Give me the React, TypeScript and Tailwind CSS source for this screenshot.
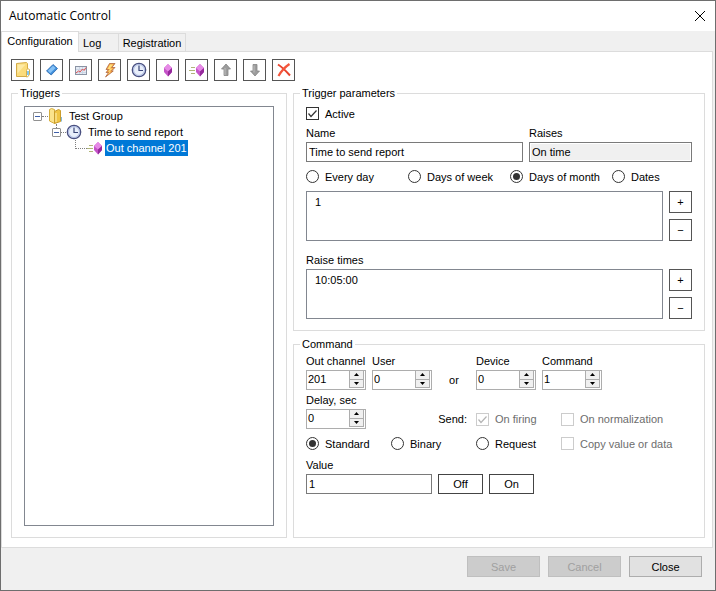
import { useId, type ReactNode } from "react";

function FolderIcon() {
  return (
    <svg width="16" height="16" viewBox="0 0 16 16" aria-hidden="true">
      <path d="M1.500 1.500l10-1 1 1v13h-11z" fill="#fbdc7c" stroke="#d3ab47" />
      <path d="M2.500 2.500h8l-8 9z" fill="#fdeaa6" />
      <path d="M11.500 8.500l1-2 2 1v5l-2 2.500h-1z" fill="#fff" stroke="#d8b04c" />
      <path d="M13 9v4" stroke="#58b4ec" strokeWidth="1.500" />
    </svg>
  );
}

function OpenFolderIcon() {
  return (
    <svg width="16" height="16" viewBox="0 0 16 16" aria-hidden="true">
      <path d="M1.500 1.500l2-1 3 1v14l-5-2.500z" fill="#fbe38c" stroke="#d6ae3c" />
      <path d="M6.500 3.500l4-2 2 1v11l-6 2z" fill="#f0c544" stroke="#c99d2e" />
      <path d="M8 5v9" stroke="#fdf0b4" />
      <path d="M13.500 9v4.500" stroke="#86b9d8" />
    </svg>
  );
}

function BlueDiamondIcon() {
  return (
    <svg width="16" height="16" viewBox="0 0 16 16" aria-hidden="true">
      <path d="M2.500 9L9 2.500 13.500 6.500 7.200 13z" fill="#3f8fdc" stroke="#2a66ac" strokeWidth="0.800" />
      <path d="M3.800 8.800L9 3.700l2.600 2.200-5.400 5.300z" fill="#86c2f6" />
    </svg>
  );
}

function ChartIcon() {
  return (
    <svg width="16" height="16" viewBox="0 0 16 16" aria-hidden="true">
      <rect x="2.500" y="4.500" width="11" height="8" fill="#e4ebf4" stroke="#8a93a3" />
      <path d="M3 7.500h10M3 10.500h10M6.500 5v7M9.500 5v7" stroke="#cbd5e4" />
      <path d="M3 11l2.500-2 1.500 1 2.500-3 1.500 1.500 2-3" fill="none" stroke="#e05050" />
    </svg>
  );
}

function BoltIcon() {
  return (
    <svg width="16" height="16" viewBox="0 0 16 16" aria-hidden="true">
      <path d="M7.500 1.500H13L9.800 5.500H13L9.500 9h1.800L3.500 15l3-4.500H4L6.500 7.500H4z" fill="#f4a044" stroke="#a85c34" strokeWidth="0.700" />
      <path d="M8 2.500h3.200L7.800 6.500h3L7 9.800h2L5.500 13l2.300-3.500H6L8.200 7H5.600z" fill="#fde07c" />
    </svg>
  );
}

function ClockIcon() {
  return (
    <svg width="16" height="16" viewBox="0 0 16 16" aria-hidden="true">
      <circle cx="8" cy="8" r="6.700" fill="#e9effb" stroke="#4a5080" strokeWidth="1.300" />
      <circle cx="8" cy="8" r="5.500" fill="none" stroke="#a9b8e0" />
      <path d="M8 3.500v5h4" fill="none" stroke="#3b4678" strokeWidth="1.200" />
    </svg>
  );
}

function Gem({ cx }: { cx: number }) {
  return (
    <g transform={`translate(${cx} 0)`}>
      <path d="M0 2l4 4v4l-4 4.500L-4 10V6z" fill="#c552c8" />
      <path d="M0 2l4 4-4 3.500L-4 6z" fill="#e68ae6" />
      <path d="M0 9.500L4 6v4l-4 4.500z" fill="#952a9c" />
    </g>
  );
}

function GemIcon() {
  return (
    <svg width="16" height="16" viewBox="0 0 16 16" aria-hidden="true">
      <Gem cx={8} />
    </svg>
  );
}

function FlyingGemIcon() {
  return (
    <svg width="16" height="16" viewBox="0 0 16 16" aria-hidden="true">
      <path d="M2 5.500h4M0 8.500h6M2 11.500h4" stroke="#b0b478" />
      <Gem cx={11} />
    </svg>
  );
}

function ArrowIcon({ down = false }: { down?: boolean }) {
  return (
    <svg width="16" height="16" viewBox="0 0 16 16" aria-hidden="true">
      <path
        d={down ? "M6 2.500h4v6.500h2.500L8 14 3.500 9H6z" : "M6 13.500h4V7h2.500L8 2 3.500 7H6z"}
        fill="#9c9c9c"
        stroke="#858585"
        strokeWidth="0.800"
      />
      <path d={down ? "M7 3.500v7" : "M7 6v7"} stroke="#bdbdbd" />
    </svg>
  );
}

function DeleteIcon() {
  return (
    <svg width="16" height="16" viewBox="0 0 16 16" aria-hidden="true">
      <path d="M2 2.500c4 2.500 8 6.500 12 11" fill="none" stroke="#e8432c" strokeWidth="2" />
      <path d="M13.500 2C9 5 5 9.500 2.500 14" fill="none" stroke="#f4563c" strokeWidth="2.200" />
    </svg>
  );
}

const tools: { label: string; icon: ReactNode }[] = [
  { label: "Add group", icon: <FolderIcon /> },
  { label: "Add trigger", icon: <BlueDiamondIcon /> },
  { label: "Add value trigger", icon: <ChartIcon /> },
  { label: "Add event trigger", icon: <BoltIcon /> },
  { label: "Add timer", icon: <ClockIcon /> },
  { label: "Add command", icon: <GemIcon /> },
  { label: "Add output command", icon: <FlyingGemIcon /> },
  { label: "Move up", icon: <ArrowIcon /> },
  { label: "Move down", icon: <ArrowIcon down /> },
  { label: "Delete", icon: <DeleteIcon /> },
];

function Group({ title, className = "", children }: { title: string; className?: string; children: ReactNode }) {
  return (
    <fieldset className={`flex min-w-0 flex-col border border-[#dcdcdc] px-1.5 pb-[11px] ${className}`}>
      <legend className="h-[13px] px-0.5 leading-[13px]">{title}</legend>
      <div className="flex min-h-0 flex-1 flex-col px-1.5">{children}</div>
    </fieldset>
  );
}

function Radio({ name, label, checked = false }: { name: string; label: string; checked?: boolean }) {
  return (
    <label className="flex h-[13px] items-center gap-1.5 whitespace-nowrap">
      <input
        type="radio"
        name={name}
        defaultChecked={checked}
        className="size-[13px] shrink-0 appearance-none rounded-full border border-[#333] bg-white bg-clip-content p-0.5 checked:bg-[#333]"
      />
      {label}
    </label>
  );
}

function Check({ label, checked = false, disabled = false }: { label: string; checked?: boolean; disabled?: boolean }) {
  return (
    <label className={`flex h-[13px] items-center gap-1.5 whitespace-nowrap ${disabled ? "text-[#6d6d6d]" : ""}`}>
      <span className="grid size-[13px] shrink-0">
        <input
          type="checkbox"
          defaultChecked={checked}
          disabled={disabled}
          className="peer col-start-1 row-start-1 size-[13px] appearance-none border border-[#333] bg-white disabled:border-[#ccc]"
        />
        <svg
          viewBox="0 0 13 13"
          className="pointer-events-none invisible col-start-1 row-start-1 size-[13px] stroke-[#333] peer-checked:visible peer-disabled:stroke-[#b4b4b4]"
          fill="none"
          aria-hidden="true"
        >
          <path d="M2.500 6.500l2.500 3 5.500-6" strokeWidth="1.200" />
        </svg>
      </span>
      {label}
    </label>
  );
}

function Spin({ label, value }: { label: string; value: number }) {
  const id = useId();
  return (
    <div className="flex w-[60px] flex-col gap-0.5">
      <label htmlFor={id} className="h-3.5 whitespace-nowrap leading-[14px]">
        {label}
      </label>
      <div className="flex h-5 border border-[#adadad] bg-white pr-px pb-px">
        <input
          id={id}
          type="number"
          defaultValue={value}
          className="h-4 w-0 flex-1 appearance-none pl-px outline-none [appearance:textfield]"
        />
        <div className="flex w-[15px] flex-col">
          <button
            aria-label={`Increase ${label}`}
            className="flex flex-1 items-center justify-center border border-t-0 border-[#adadad] bg-[#f0f0f0]"
          >
            <svg width="5" height="3" viewBox="0 0 5 3" aria-hidden="true">
              <path d="M0 3h5L2.500 0z" />
            </svg>
          </button>
          <button
            aria-label={`Decrease ${label}`}
            className="flex flex-1 items-center justify-center border border-t-0 border-[#adadad] bg-[#f0f0f0]"
          >
            <svg width="5" height="3" viewBox="0 0 5 3" aria-hidden="true">
              <path d="M0 0h5L2.500 3z" />
            </svg>
          </button>
        </div>
      </div>
    </div>
  );
}

function TextField({
  label,
  value,
  readOnly = false,
  className = "",
}: {
  label: string;
  value: string;
  readOnly?: boolean;
  className?: string;
}) {
  const id = useId();
  return (
    <div className={`flex flex-col gap-0.5 ${className}`}>
      <label htmlFor={id} className="h-3.5 leading-[14px]">
        {label}
      </label>
      <input
        id={id}
        type="text"
        defaultValue={value}
        readOnly={readOnly}
        className="h-5 w-full border border-[#7a7a7a] bg-white px-0.5 outline-none read-only:bg-[#f0f0f0] read-only:shadow-[inset_0_0_0_1px_#fff]"
      />
    </div>
  );
}

function ListEditor({ label, items }: { label: string; items: string[] }) {
  return (
    <div className="flex gap-1.5">
      <select aria-label={label} size={2} className="h-[50px] min-w-0 flex-1 overflow-hidden border border-[#828790] bg-white px-0.5 pt-1 outline-none">
        {items.map((item) => (
          <option key={item} className="h-4 px-1.5 leading-4">
            {item}
          </option>
        ))}
      </select>
      <div className="flex flex-col gap-1.5">
        <button aria-label={`Add to ${label}`} className="h-[22px] w-[23px] border border-[#555] leading-[20px]">
          +
        </button>
        <button aria-label={`Remove from ${label}`} className="h-[22px] w-[23px] border border-[#555] leading-[20px]">
          −
        </button>
      </div>
    </div>
  );
}

function Expander() {
  return (
    <button aria-label="Collapse" className="flex size-[9px] shrink-0 items-center justify-center rounded-[1px] border border-[#919191] bg-white">
      <svg width="5" height="1" viewBox="0 0 5 1" aria-hidden="true">
        <path d="M0 0h5v1H0z" fill="#3f5fa8" />
      </svg>
    </button>
  );
}

function TriggerTree() {
  return (
    <ul role="tree" aria-label="Triggers" className="flex-1 border border-[#828790] bg-white py-px">
      <li role="treeitem" aria-expanded="true">
        <div className="flex h-4 items-center pl-2">
          <Expander />
          <span className="w-1.5 border-t border-dotted border-[#808080]" />
          <OpenFolderIcon />
          <span className="pl-[5px]">Test Group</span>
        </div>
        <ul role="group">
          <li role="treeitem" aria-expanded="true">
            <div className="flex h-4 items-center pl-[27px]">
              <span className="flex h-4 flex-col items-center">
                <span className="h-1 border-l border-dotted border-[#808080]" />
                <Expander />
              </span>
              <span className="w-[5px] border-t border-dotted border-[#808080]" />
              <ClockIcon />
              <span className="pl-1.5">Time to send report</span>
            </div>
            <ul role="group">
              <li role="treeitem" aria-selected="true" className="flex h-4 items-center pl-[50px]">
                <span className="h-[9px] w-3 self-start border-b border-l border-dotted border-[#808080]" />
                <FlyingGemIcon />
                <span className="ml-0.5 h-4 bg-[#0078d7] px-px leading-4 text-white">Out channel 201</span>
              </li>
            </ul>
          </li>
        </ul>
      </li>
    </ul>
  );
}

export default function App() {
  return (
    <div className="flex min-h-screen flex-col border border-[#6e6e6e] bg-[#f0f0f0] font-['Liberation_Sans',Arial,sans-serif] text-[11px] leading-[14px] text-black">
      <header className="flex h-[30px] items-center justify-between bg-white pr-[9px] pl-2">
        <h1 className="font-['Open_Sans','Noto_Sans',sans-serif] text-xs">Automatic Control</h1>
        <button aria-label="Close window">
          <svg width="12" height="12" viewBox="0 0 12 12" fill="none" stroke="#000" aria-hidden="true">
            <path d="M1 1l10 10M11 1L1 11" />
          </svg>
        </button>
      </header>

      <div role="tablist" className="flex h-5 items-end">
        <button
          role="tab"
          aria-selected="true"
          className="z-10 -mb-px h-[21px] w-[78px] border border-b-0 border-[#dcdcdc] bg-white pb-0.5"
        >
          Configuration
        </button>
        <button role="tab" className="h-[18px] w-10 border-t border-r border-[#dcdcdc] pl-1 text-left">
          Log
        </button>
        <button role="tab" className="h-[18px] w-[67px] border-t border-r border-[#dcdcdc]">
          Registration
        </button>
      </div>

      <main className="mr-0.5 flex flex-1 flex-col gap-1.5 border border-[#dcdcdc] bg-white pt-[7px] pr-[7px] pb-[9px] pl-[9px]">
        <div role="toolbar" className="flex gap-1.5">
          {tools.map(({ label, icon }) => (
            <button
              key={label}
              aria-label={label}
              className="flex h-[22px] w-[23px] items-center justify-center border border-[#555] bg-white"
            >
              {icon}
            </button>
          ))}
        </div>

        <div className="flex flex-1 gap-1.5">
          <Group title="Triggers" className="w-[276px] shrink-0 pt-1.5">
            <TriggerTree />
          </Group>

          <div className="flex min-w-0 flex-1 flex-col gap-[7px]">
            <Group title="Trigger parameters" className="pt-[7px]">
              <Check label="Active" checked />
              <div className="flex gap-1.5 pt-1.5">
                <TextField label="Name" value="Time to send report" className="min-w-0 flex-1" />
                <TextField label="Raises" value="On time" readOnly className="w-[163px]" />
              </div>
              <div className="grid grid-cols-[102px_102px_102px_auto] py-2">
                <Radio name="schedule" label="Every day" />
                <Radio name="schedule" label="Days of week" />
                <Radio name="schedule" label="Days of month" checked />
                <Radio name="schedule" label="Dates" />
              </div>
              <ListEditor label="Days" items={["1"]} />
              <p className="pt-3 pb-0.5">Raise times</p>
              <ListEditor label="Raise times" items={["10:05:00"]} />
            </Group>

            <Group title="Command" className="flex-1 pt-[3px]">
              <div className="flex items-end gap-1.5">
                <Spin label="Out channel" value={201} />
                <Spin label="User" value={0} />
                <span className="flex h-5 w-8 items-center justify-center">or</span>
                <Spin label="Device" value={0} />
                <Spin label="Command" value={1} />
              </div>
              <div className="grid grid-cols-[85px_85px_85px_auto] items-end pt-[3px]">
                <Spin label="Delay, sec" value={0} />
                <span className="flex h-5 items-center justify-end pr-[9px]">Send:</span>
                <span className="flex h-5 items-center">
                  <Check label="On firing" checked disabled />
                </span>
                <span className="flex h-5 items-center">
                  <Check label="On normalization" disabled />
                </span>
              </div>
              <div className="grid grid-cols-[85px_85px_85px_auto] py-2">
                <Radio name="kind" label="Standard" checked />
                <Radio name="kind" label="Binary" />
                <Radio name="kind" label="Request" />
                <Check label="Copy value or data" disabled />
              </div>
              <div className="flex items-end gap-1.5">
                <TextField label="Value" value="1" className="w-[126px]" />
                <button className="h-5 w-[45px] border border-[#444]">Off</button>
                <button className="h-5 w-[45px] border border-[#444]">On</button>
              </div>
            </Group>
          </div>
        </div>
      </main>

      <footer className="flex justify-end gap-2 pt-2 pr-[13px] pb-[13px]">
        <button disabled className="h-[21px] w-[73px] border border-[#bfbfbf] bg-[#ccc] text-[#a0a0a0]">
          Save
        </button>
        <button disabled className="h-[21px] w-[73px] border border-[#bfbfbf] bg-[#ccc] text-[#a0a0a0]">
          Cancel
        </button>
        <button className="h-[21px] w-[73px] border border-[#adadad] bg-[#e1e1e1]">Close</button>
      </footer>
    </div>
  );
}
